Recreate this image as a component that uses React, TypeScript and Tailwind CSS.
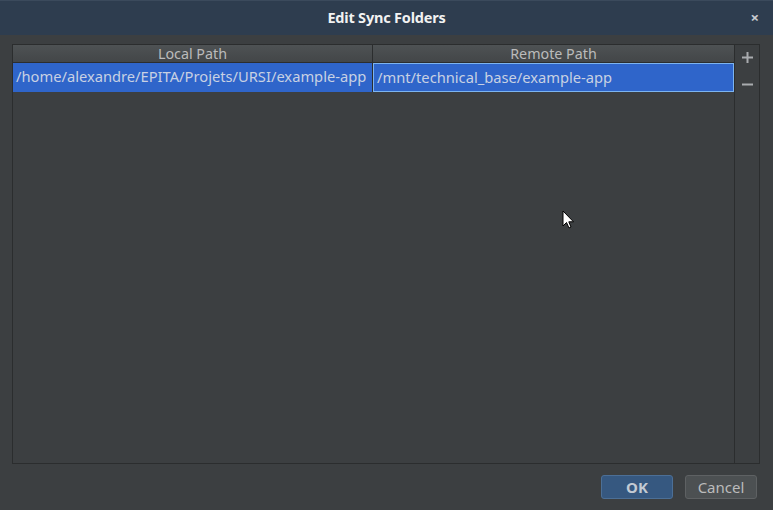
import React from "react";

export default function App() {
  const font = { fontFamily: '"Noto Sans", "DejaVu Sans", sans-serif' };
  return (
    <div className="relative w-[773px] h-[510px] bg-[#3c3f41] flex flex-col overflow-hidden" style={font}>
      {/* Title bar */}
      <div className="relative h-[35px] bg-[#2e3d4f] border-t border-[#3b4a5c] flex items-center justify-center shrink-0">
        <span className="text-[14.5px] font-bold text-[#f2f2f2] tracking-[-0.2px]">Edit Sync Folders</span>
        <span className="absolute right-[14px] top-[9px] text-[15px] font-bold text-[#c9ccd0] leading-none">×</span>
      </div>

      {/* Body */}
      <div className="flex pl-[12px] pt-[9px] h-[429px] shrink-0">
        <div className="w-[723px] h-[420px] border border-[#2b2d2e] flex flex-col">
          {/* header */}
          <div className="flex h-[18px] bg-gradient-to-b from-[#4e5254] to-[#434648] border-b border-[#2b2d2e] text-[14.3px] text-[#bbbbbb] leading-[18px]">
            <div className="w-[360px] text-center border-r border-[#2b2d2e]">Local Path</div>
            <div className="flex-1 text-center">Remote Path</div>
          </div>
          {/* row */}
          <div className="flex h-[29px] bg-[#2f65ca] text-[14.7px] text-[#c8d1e3] leading-[26px]">
            <div className="w-[360px] pl-[3px] border-r border-[#2b2d2e] whitespace-nowrap overflow-hidden">/home/alexandre/EPITA/Projets/URSI/example-app</div>
            <div className="flex-1 pl-[3px] border border-[#7cb4f0] whitespace-nowrap overflow-hidden">/mnt/technical_base/example-app</div>
          </div>
          <div className="flex-1" />
        </div>
        <div className="w-[25px] h-[420px] border border-l-0 border-[#2b2d2e] flex flex-col items-center pt-[7px] gap-[9px] text-[#a9acaf]">
          <svg width="11" height="11" viewBox="0 0 11 11"><path d="M5.5 0v11M0 5.5h11" stroke="#a9acaf" strokeWidth="2" /></svg>
          <svg width="11" height="11" viewBox="0 0 11 11" className="mt-[7px]"><path d="M0 5.5h11" stroke="#a9acaf" strokeWidth="2" /></svg>
        </div>
      </div>

      {/* Footer */}
      <div className="flex justify-end gap-[12px] pr-[16px] pt-[11px]">
        <button className="w-[72px] h-[24px] rounded-[3px] bg-[#365880] border border-[#4c6f96] text-[15px] font-bold text-[#c3cad3] leading-none">OK</button>
        <button className="w-[72px] h-[24px] rounded-[3px] bg-[#4c5052] border border-[#5e6163] text-[15px] text-[#bbbbbb] leading-none">Cancel</button>
      </div>

      {/* mouse cursor */}
      <svg className="absolute left-[562px] top-[210px]" width="14" height="20" viewBox="0 0 14 20">
        <path d="M1 1 L1 16 L4.5 12.5 L7 18 L9 17 L6.8 11.8 L11.5 11.8 Z" fill="#ffffff" stroke="#000000" strokeWidth="1" strokeLinejoin="round" />
      </svg>
    </div>
  );
}
